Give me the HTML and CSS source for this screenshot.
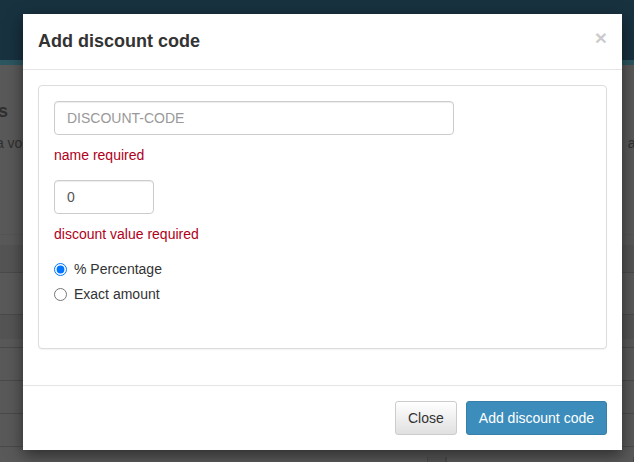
FILE: index.html
```html
<!DOCTYPE html>
<html lang="en">
<head>
<meta charset="utf-8">
<title>Add discount code</title>
<link rel="stylesheet" href="styles.css">
</head>
<body>
<div class="page">
  <header class="topbar"></header>
  <div class="strip"></div>
  <main class="content">
    <h1 class="content-title">Discount codes</h1>
    <p class="content-text"><span class="text-left">Create a voucher</span><span class="text-right">are</span></p>
    <div class="bg-rule"></div>
    <div class="bg-table">
      <div class="bg-row bg-head"></div>
      <div class="bg-row"></div>
      <div class="bg-row bg-band"></div>
      <div class="bg-row"></div>
      <div class="bg-row"></div>
      <div class="bg-row"></div>
    </div>
    <div class="bg-tabs">
      <span class="bg-tab bg-tab-a"></span>
      <span class="bg-tab bg-tab-b"></span>
    </div>
  </main>
</div>

<div class="modal" role="dialog" aria-labelledby="modal-title">
  <div class="modal-header">
    <h4 class="modal-title" id="modal-title">Add discount code</h4>
    <button class="close" type="button" aria-label="Close">&times;</button>
  </div>
  <div class="modal-body">
    <div class="panel">
      <div class="field">
        <input class="form-control code-input" type="text" placeholder="DISCOUNT-CODE">
        <p class="error">name required</p>
      </div>
      <div class="field">
        <input class="form-control value-input" type="text" value="0">
        <p class="error">discount value required</p>
      </div>
      <div class="radios">
        <label class="radio"><input type="radio" name="kind" checked> % Percentage</label>
        <label class="radio"><input type="radio" name="kind"> Exact amount</label>
      </div>
    </div>
  </div>
  <div class="modal-footer">
    <button class="btn btn-default" type="button">Close</button>
    <button class="btn btn-primary" type="button">Add discount code</button>
  </div>
</div>
</body>
</html>
```

FILE: styles.css
```css
* { box-sizing: border-box; }

html, body {
  margin: 0;
  padding: 0;
  height: 100%;
  overflow: hidden;
}

body {
  font-family: "Liberation Sans", Arial, Helvetica, sans-serif;
  font-size: 14px;
  line-height: 20px;
  color: #333;
  background: #595959;
}

/* dimmed page behind the modal */
.page {
  height: 462px;
  overflow: hidden;
  background: #595959;
}

.topbar {
  height: 60px;
  background: #183240;
}

.strip {
  height: 5px;
  background: #2c5660;
}

.content {
  display: flex;
  flex-direction: column;
}

.content-title {
  margin: 34px 0 0 -126px;
  font-size: 18px;
  line-height: 24px;
  font-weight: bold;
  color: #303030;
  white-space: nowrap;
}

.content-text {
  display: flex;
  justify-content: space-between;
  margin: 11px -14px 0 -50px;
  font-size: 14px;
  line-height: 18px;
  color: #303030;
  white-space: nowrap;
}

.bg-rule {
  margin-top: 82px;
  height: 1px;
  background: #555;
}

.bg-table {
  margin-top: 10px;
  display: flex;
  flex-direction: column;
}

.bg-row {
  height: 33px;
  border-bottom: 1px solid #4a4a4a;
}

.bg-head {
  height: 28px;
  background: #545454;
}

.bg-row:nth-child(2) { height: 42px; }

.bg-band {
  background: linear-gradient(#545454 0 24px, transparent 24px);
}

.bg-tabs {
  display: flex;
  margin-left: 427px;
  margin-top: 10px;
}

.bg-tab {
  height: 30px;
  border: 1px solid #4a4a4a;
  border-top: 0;
  border-radius: 0 0 4px 4px;
}

.bg-tab-a { width: 20px; background: #555; }
.bg-tab-b { width: 200px; }

/* modal */
.modal {
  position: absolute;
  left: 23px;
  top: 14px;
  width: 599px;
  background: #fff;
  box-shadow: 0 5px 15px rgba(0, 0, 0, 0.5);
}

.modal-header {
  display: flex;
  justify-content: space-between;
  align-items: flex-start;
  padding: 15px;
  border-bottom: 1px solid #e5e5e5;
}

.modal-title {
  margin: 0;
  font-size: 18px;
  line-height: 25px;
  font-weight: bold;
  color: #333;
}

.close {
  margin-top: -2px;
  padding: 0;
  border: 0;
  background: transparent;
  font-family: "Liberation Sans", Arial, sans-serif;
  font-size: 21px;
  font-weight: bold;
  line-height: 21px;
  color: #000;
  opacity: 0.2;
  cursor: pointer;
}

.modal-body {
  padding: 15px;
}

.panel {
  margin-bottom: 21px;
  padding: 15px 15px 44px;
  border: 1px solid #ddd;
  border-radius: 4px;
  background: #fff;
  box-shadow: 0 1px 1px rgba(0, 0, 0, 0.05);
}

.field {
  margin-bottom: 15px;
}

.form-control {
  display: block;
  height: 34px;
  padding: 6px 12px;
  font-family: inherit;
  font-size: 14px;
  line-height: 20px;
  color: #555;
  background: #fff;
  border: 1px solid #ccc;
  border-radius: 4px;
  box-shadow: inset 0 1px 1px rgba(0, 0, 0, 0.075);
}

.form-control::placeholder {
  color: #999;
}

.code-input { width: 400px; }
.value-input { width: 100px; }

.error {
  margin: 10px 0 0;
  color: #b0001a;
}

.radios {
  display: flex;
  flex-direction: column;
  gap: 5px;
}

.radio {
  display: flex;
  align-items: center;
  gap: 7px;
  height: 20px;
  color: #333;
}

.radio input {
  width: 13px;
  height: 13px;
  margin: 0;
}

.modal-footer {
  display: flex;
  justify-content: flex-end;
  gap: 9px;
  padding: 15px;
  border-top: 1px solid #e5e5e5;
}

.btn {
  height: 34px;
  padding: 6px 12px;
  font-family: inherit;
  font-size: 14px;
  line-height: 20px;
  border: 1px solid transparent;
  border-radius: 3px;
  cursor: pointer;
}

.btn-default {
  color: #333;
  background: linear-gradient(#fff, #e0e0e0);
  border-color: #ccc;
}

.btn-primary {
  color: #fff;
  background: #3c8dbc;
  border-color: #367fa9;
}
```
